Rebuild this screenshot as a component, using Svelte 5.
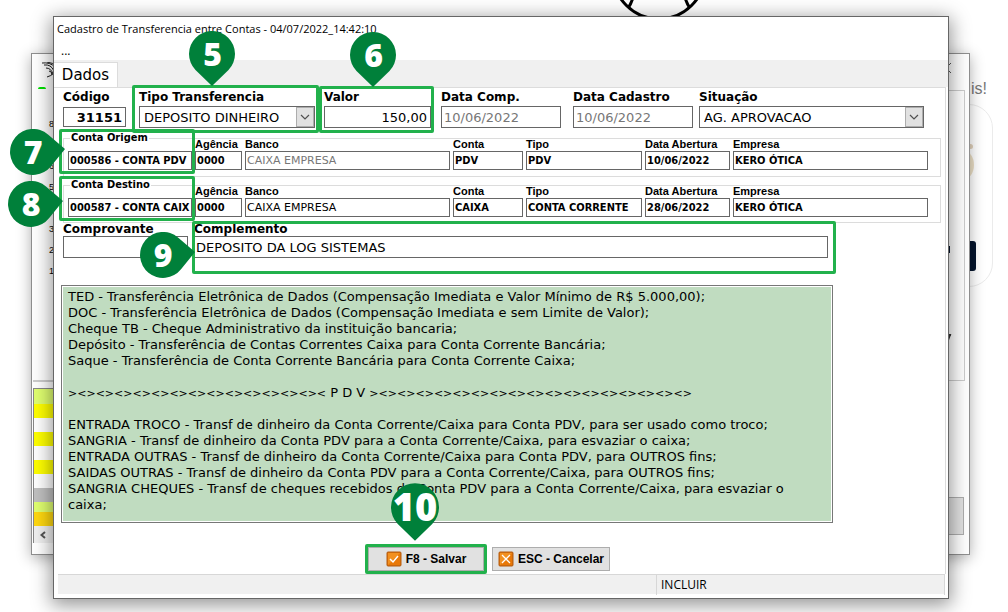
<script>
  const accounts = [
    { id: 'origem', legend: 'Conta Origem', pin: '7', account: '000586 - CONTA PDV', agency: '0000', bank: 'CAIXA EMPRESA', disabled: true, number: 'PDV', kind: 'PDV', opened: '10/06/2022', company: 'KERO ÓTICA' },
    { id: 'destino', legend: 'Conta Destino', pin: '8', account: '000587 - CONTA CAIX', agency: '0000', bank: 'CAIXA EMPRESA', disabled: false, number: 'CAIXA', kind: 'CONTA CORRENTE', opened: '28/06/2022', company: 'KERO ÓTICA' }
  ];

  const transfers = `TED - Transferência Eletrônica de Dados (Compensação Imediata e Valor Mínimo de R$ 5.000,00);
DOC - Transferência Eletrônica de Dados (Compensação Imediata e sem Limite de Valor);
Cheque TB - Cheque Administrativo da instituição bancaria;
Depósito - Transferência de Contas Correntes Caixa para Conta Corrente Bancária;
Saque - Transferência de Conta Corrente Bancária para Conta Corrente Caixa;`;

  const ruleStart = '><><><><><><><><><><><><><><';
  const ruleEnd = '><><><><><><><><><><><><><><><><><>';

  const pdv = `ENTRADA TROCO - Transf de dinheiro da Conta Corrente/Caixa para Conta PDV, para ser usado como troco;
SANGRIA - Transf de dinheiro da Conta PDV para a Conta Corrente/Caixa, para esvaziar o caixa;
ENTRADA OUTRAS - Transf de dinheiro da Conta Corrente/Caixa para Conta PDV, para OUTROS fins;
SAIDAS OUTRAS - Transf de dinheiro da Conta PDV para a Conta Corrente/Caixa, para OUTROS fins;
SANGRIA CHEQUES - Transf de cheques recebidos da Conta PDV para a Conta Corrente/Caixa, para esvaziar o
caixa;`;

  const axis = ['8', '7', '6', '5', '4', '3', '2', '10'];
  const stripes = ['lime', 'yellow', 'white', 'yellow', 'white', 'yellow', 'white', 'gray', 'lime short', 'gold'];
</script>

{#snippet pinDown(n)}
  <span class="pin down" class:large={n === '10'}>
    <svg viewBox="0 0 46 55" aria-hidden="true"><path d="M23 55 6.5 39A23 23 0 1 1 39.5 39Z" fill="#00803a" /></svg>
    <b>{n}</b>
  </span>
{/snippet}

{#snippet pinRight(n)}
  <span class="pin right">
    <svg viewBox="0 0 55 46" aria-hidden="true"><path d="M55 20 38 5.5A23 23 0 1 0 41 37.3Z" fill="#00803a" /></svg>
    <b>{n}</b>
  </span>
{/snippet}

{#snippet arrow()}
  <span class="arrow" aria-hidden="true">
    <svg viewBox="0 0 10 6"><path d="M1 1l4 4 4-4" fill="none" stroke="#505050" stroke-width="1.2" /></svg>
  </span>
{/snippet}

<div class="desktop">
  <svg class="figure" viewBox="0 0 84 18" aria-hidden="true">
    <g fill="none" stroke="#000" stroke-width="3">
      <circle cx="42" cy="-27" r="46" />
      <path d="M15.500-1Q14 4 11 8M68.500-1Q70 4 73 8" />
    </g>
  </svg>
  <div class="page-text">is!</div>
  <div class="page-card">
    <i class="dot"></i><i class="blob"></i><i class="navy"></i>
  </div>

  <div class="back">
    <svg class="swirl" viewBox="0 0 14 16" aria-hidden="true">
      <path d="M0 1q8-1 13 4M2 3q7-1 10 6M4 6q5 0 7 6M5 0q7 1 9 4M5 15q4-1 7-4M7 9q3 0 3 4" fill="none" stroke="#222" />
    </svg>
    <span class="green"></span>
    <div class="axis">{#each axis as a}<span>{a}</span>{/each}</div>
    <div class="list">
      {#each stripes as s}<span class={s}></span>{/each}
      <span class="scroll"><svg viewBox="0 0 8 8" aria-hidden="true"><path d="M6 1 2.500 4 6 7" fill="none" stroke="#555" stroke-width="2" /></svg></span>
    </div>
    <svg class="close" viewBox="0 0 10 10" aria-hidden="true"><path d="M0 0l10 10M10 0 0 10" stroke="#555" /></svg>
    <div class="back-panel"><i class="bit"></i><i class="hook"></i></div>
    <div class="back-button"></div>
  </div>

  <main class="dialog">
    <header>Cadastro de Transferencia entre Contas - 04/07/2022_14:42:10</header>
    <nav>...</nav>
    <div class="tabs"><button type="button" class="tab">Dados</button></div>

    <form class="panel" onsubmit={(e) => e.preventDefault()}>
      <div class="top">
        <div class="field code">
          <label for="codigo">Código</label>
          <input id="codigo" value="31151" />
        </div>
        <div class="field kind">
          <label for="tipo">Tipo Transferencia</label>
          <select id="tipo"><option>DEPOSITO DINHEIRO</option></select>
          {@render arrow()}
          <div class="ring">{@render pinDown('5')}</div>
        </div>
        <div class="field amount">
          <label for="valor">Valor</label>
          <input id="valor" value="150,00" />
          <div class="ring">{@render pinDown('6')}</div>
        </div>
        <div class="field date">
          <label for="comp">Data Comp.</label>
          <input id="comp" value="10/06/2022" disabled />
        </div>
        <div class="field registered">
          <label for="cadastro">Data Cadastro</label>
          <input id="cadastro" value="10/06/2022" disabled />
        </div>
        <div class="field">
          <label for="situacao">Situação</label>
          <select id="situacao"><option>AG. APROVACAO</option></select>
          {@render arrow()}
        </div>
      </div>

      {#each accounts as a}
        <fieldset class={a.id}>
          <legend id="{a.id}-legend">{a.legend}</legend>
          <div class="account">
            <div class="cell first">
              <input aria-labelledby="{a.id}-legend" value={a.account} />
              <div class="ring">{@render pinRight(a.pin)}</div>
            </div>
            <div class="cell"><label for="{a.id}-ag">Agência</label><input id="{a.id}-ag" value={a.agency} /></div>
            <div class="cell bank"><label for="{a.id}-banco">Banco</label><input id="{a.id}-banco" value={a.bank} disabled={a.disabled} /></div>
            <div class="cell"><label for="{a.id}-conta">Conta</label><input id="{a.id}-conta" value={a.number} /></div>
            <div class="cell"><label for="{a.id}-tipo">Tipo</label><input id="{a.id}-tipo" value={a.kind} /></div>
            <div class="cell"><label for="{a.id}-data">Data Abertura</label><input id="{a.id}-data" value={a.opened} /></div>
            <div class="cell"><label for="{a.id}-emp">Empresa</label><input id="{a.id}-emp" value={a.company} /></div>
          </div>
        </fieldset>
      {/each}

      <div class="notes">
        <div class="field">
          <label for="comprovante">Comprovante</label>
          <input id="comprovante" />
        </div>
        <div class="field complement">
          <label for="complemento">Complemento</label>
          <input id="complemento" value="DEPOSITO DA LOG SISTEMAS" />
          <div class="ring">{@render pinRight('9')}</div>
        </div>
      </div>

      <div class="memo">
        <p>{transfers}</p>
        <p><span class="rule">{ruleStart}</span> P D V <span class="rule">{ruleEnd}</span></p>
        <p>{pdv}</p>
      </div>

      <div class="actions">
        <div class="save">
          <button type="submit">
            <svg viewBox="0 0 16 16" aria-hidden="true">
              <rect x=".5" y=".5" width="15" height="15" rx="2" fill="#fff3e0" />
              <rect x="1" y="1" width="14" height="14" rx="1" fill="#e87808" stroke="#a85410" />
              <path d="M2 14V2h12Z" fill="#f8a030" opacity=".6" />
              <path d="M4 8l3 3 5-6" fill="none" stroke="#fff" stroke-width="1.500" />
            </svg>
            F8 - Salvar
          </button>
          <div class="ring">{@render pinDown('10')}</div>
        </div>
        <button type="button">
          <svg viewBox="0 0 16 16" aria-hidden="true">
            <rect x=".5" y=".5" width="15" height="15" rx="2" fill="#fff3e0" />
            <rect x="1" y="1" width="14" height="14" rx="1" fill="#e87808" stroke="#a85410" />
            <path d="M2 14V2h12Z" fill="#f8a030" opacity=".6" />
            <path d="M4 4l8 8M12 4l-8 8" fill="none" stroke="#fff" stroke-width="1.300" />
          </svg>
          ESC - Cancelar
        </button>
      </div>
    </form>

    <footer><span></span><span>INCLUIR</span></footer>
  </main>
</div>

<style>
  :global(body) { margin: 0; background: #fff; }
  .desktop {
    position: relative;
    box-sizing: border-box;
    min-height: 100vh;
    padding: 16px 59px 13px 53px;
    overflow: hidden;
    font-family: "DejaVu Sans", sans-serif;
    color: #000;
  }
  .desktop *, .desktop *::before { box-sizing: border-box; }

  .figure { position: absolute; left: 617px; top: 0; width: 84px; height: 18px; }
  .page-text { position: absolute; right: 21px; top: 79px; font: 16px/20px "Liberation Sans", sans-serif; color: #777; }
  .page-card {
    position: absolute; right: 15px; top: 104px; width: 60px; height: 183px;
    border: 1px solid #ebebeb; border-radius: 0 24px 24px 0;
  }
  .page-card i { position: absolute; }
  .dot { right: 19px; top: 39px; width: 5px; height: 5px; border-radius: 50%; background: #e2d2bc; }
  .blob { right: 18px; top: 46px; width: 20px; height: 28px; border-radius: 50%; background: #ebdfc6; }
  .navy { right: 16px; top: 136px; width: 30px; height: 30px; border-radius: 3px; background: #04142c; }

  .back {
    position: absolute; left: 31px; right: 38px; top: 53px; height: 502px;
    background: #fff; border: 1px solid #8f8f8f; box-shadow: 0 3px 14px rgb(0 0 0 / .32);
  }
  .swirl { position: absolute; left: 10px; top: 8px; width: 14px; height: 16px; }
  .green { position: absolute; left: 6px; top: 33px; width: 8px; height: 2px; border-radius: 2px 2px 0 0; background: #00e000; }
  .axis { position: absolute; left: 17px; top: 60px; display: grid; grid-auto-rows: 21px; font: 9px/21px "Liberation Sans", sans-serif; }
  .list {
    position: absolute; left: 1px; top: 326px; width: 30px; padding-top: 6px;
    border-top: 2px solid #ccc; display: flex; flex-direction: column;
  }
  .list span { height: 14px; border-left: 1px solid #888; }
  .list span:first-child { height: 16px; border-top: 1px solid #888; }
  .list .lime { background: #e0ff70; }
  .list .yellow { background: #ff0; }
  .list .gray { background: #c0c0c0; }
  .list .gold { background: #ffd810; }
  .list .short { height: 10px; }
  .list .scroll { height: 17px; padding: 5px; background: #f0f0f0; line-height: 0; }
  .scroll svg { width: 8px; height: 8px; }
  .close { position: absolute; right: 18px; top: 9px; width: 10px; height: 10px; }
  .back-panel { position: absolute; right: 4px; top: 36px; width: 60px; height: 291px; border: 1px solid #ccc; border-left: 0; }
  .back-panel i { position: absolute; right: 14px; width: 8px; }
  .bit { top: 155px; height: 7px; background: #04142c; }
  .hook { top: 243px; height: 7px; border: solid #333; border-width: 2px 2px 0 0; transform: skewX(-20deg); }
  .back-button { position: absolute; right: 5px; top: 443px; width: 60px; height: 38px; background: #e1e1e1; border: 1px solid #adadad; }

  .dialog {
    position: relative; display: flex; flex-direction: column;
    min-height: 583px; border: 1px solid #666; background: #fff;
    box-shadow: 0 4px 18px 2px rgb(0 0 0 / .42);
  }
  header { height: 26px; padding-left: 3px; font: 11px/24px "Open Sans", sans-serif; white-space: nowrap; }
  nav { height: 17px; padding-left: 7px; font: 12px/16px "Open Sans", sans-serif; }
  .tabs { height: 27px; background: #f0f0f0; padding-top: 2px; }
  .tab {
    width: 64px; height: 25px; padding: 0; border: 1px solid #dcdcdc; border-bottom: 0; border-left: 0;
    background: #fff; font: 15px/24px "DejaVu Sans", sans-serif; color: #000;
  }
  .panel {
    flex: 1; margin: 0 2px 0 0; padding: 1px 6px 0 9px;
    border-right: 1px solid #dcdcdc; border-top: 1px solid #dcdcdc;
  }

  .field, .cell, .save { position: relative; }
  label { display: block; white-space: nowrap; }
  input, select {
    display: block; width: 100%; margin: 0; border: 1px solid #666; border-radius: 0;
    background: #fff; color: #000; outline: 0;
  }
  input:disabled { color: #777; }
  .field label { font: bold 12px/17px "DejaVu Sans", sans-serif; }
  .field input, .field select { height: 22px; padding: 0 4px; font: 13px "DejaVu Sans", sans-serif; }
  .field select { appearance: none; }
  .top { display: grid; grid-template-columns: 76px 185px 117px 132px 126px 1fr; padding-right: 15px; }
  .code { margin-right: 13px; }
  .code input { height: 20px; margin-top: 1px; padding: 0 3px; font-weight: bold; text-align: right; }
  .kind { margin-right: 9px; }
  .amount { margin-right: 10px; }
  .amount input { padding: 0 3px; text-align: right; }
  .date { margin-right: 12px; }
  .registered { margin-right: 6px; }
  .date input, .registered input { padding: 0 2px; }
  .arrow {
    position: absolute; right: 1px; top: 18px; width: 18px; height: 20px;
    display: grid; place-items: center; background: #e1e1e1; border: 1px solid #adadad; pointer-events: none;
  }
  .arrow svg { width: 10px; height: 6px; }

  fieldset { min-width: 0; margin: 0 -2px 0 0; padding: 0 12px 6px 4px; border: 1px solid #dcdcdc; }
  .origem { margin-top: 3px; }
  .destino { margin-top: 1px; padding-bottom: 5px; }
  legend { margin-left: 2px; padding: 0 1px; font: bold 11px/14px "DejaVu Sans Condensed", "DejaVu Sans", sans-serif; }
  .account { display: grid; grid-template-columns: 124px 47px 205px 70px 116px 85px 1fr; gap: 3px; align-items: end; margin-top: -7px; }
  .cell label { font: bold 11px/13px "Liberation Sans", sans-serif; }
  .cell input { height: 19px; padding: 0 1px; font: bold 11px "DejaVu Sans Condensed", "DejaVu Sans", sans-serif; }
  .cell.bank input { font: 11px "DejaVu Sans", sans-serif; }
  .first { padding-top: 13px; }

  .notes { display: grid; grid-template-columns: 125px 635px; gap: 5px; }
  .notes .field label { line-height: 13px; }
  .notes input { padding: 0 2px; }
  .complement label { padding-left: 1px; }

  .memo {
    width: 772px; max-width: 100%; min-height: 238px; margin: 27px 0 0 -2px; padding: 3px 6px 8px;
    border: 1px solid #777; outline: 1px solid #fff; outline-offset: -2px;
    background: #c0dcc0; font: 13px/16px "DejaVu Sans", sans-serif;
  }
  .memo p { margin: 0 0 16px; white-space: pre; }
  .memo p:last-child { margin: 0; }
  .rule { font-size: 11px; line-height: 1; }
  .actions { display: flex; justify-content: center; gap: 8px; margin-top: 24px; padding-right: 24px; }
  .actions button {
    display: flex; align-items: center; justify-content: center; gap: 4px; width: 118px; height: 24px; padding: 0;
    background: #e1e1e1; border: 1px solid #adadad; color: #000; white-space: nowrap; font: bold 12px "Liberation Sans", sans-serif;
  }
  .actions .save button { width: 116px; }
  .actions svg { width: 16px; height: 16px; }

  .ring { position: absolute; inset: -4px -4px -5px -7px; z-index: 2; border: 3px solid #22b14c; border-radius: 2px; pointer-events: none; }
  .amount .ring { inset: -3px -3px -5px -5px; }
  .cell .ring { inset: -9px -3px -4px -9px; }
  .complement .ring { inset: -2px -8px -16px -1px; }
  .save .ring { inset: -3px; }
  .pin { position: absolute; z-index: 3; color: #fff; font: 800 32px/46px "Open Sans", sans-serif; text-align: center; }
  .pin svg { display: block; width: 100%; height: 100%; }
  .pin b { position: absolute; left: 0; top: 0; width: 46px; height: 46px; font-weight: 800; }
  .down { left: 50%; bottom: calc(100% + 2px); width: 46px; height: 55px; margin-left: -37px; }
  .amount .down { margin-left: -27px; }
  .down.large { bottom: calc(100% + 6px); width: 48px; height: 58px; margin-left: -35px; font-size: 38px; }
  .down.large b { left: -6px; width: 60px; }
  .down b { left: 1px; }
  .right { right: calc(100% - 1px); top: -3px; width: 55px; height: 46px; }
  .origem .right { right: calc(100% - 3px); }
  .destino .right { top: 2px; }
  .complement .right { right: 100%; top: 8px; }

  footer {
    display: grid; grid-template-columns: 599px 1fr; height: 20px; margin: 0 3px 4px 4px;
    background: #f0f0f0; border-top: 1px solid #d7d7d7; font: 12px/20px "Open Sans", sans-serif;
  }
  footer span { border-right: 1px solid #d7d7d7; padding-left: 4px; }
</style>
